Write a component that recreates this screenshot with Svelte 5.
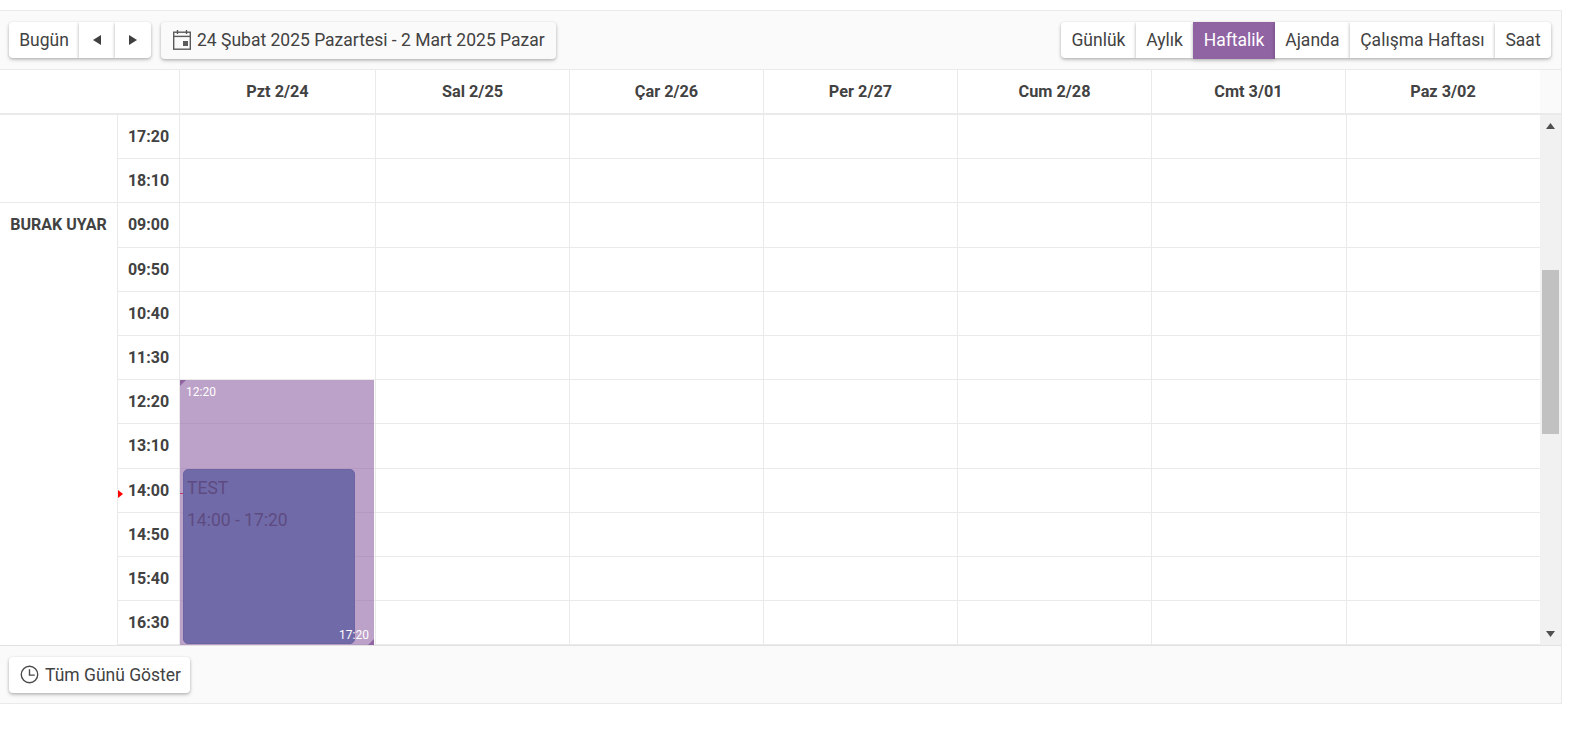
<script>
	const days = ['Pzt 2/24', 'Sal 2/25', 'Çar 2/26', 'Per 2/27', 'Cum 2/28', 'Cmt 3/01', 'Paz 3/02'];
	const times = ['17:20', '18:10', '09:00', '09:50', '10:40', '11:30', '12:20', '13:10', '14:00', '14:50', '15:40', '16:30'];
	const views = ['Günlük', 'Aylık', 'Haftalik', 'Ajanda', 'Çalışma Haftası', 'Saat'];
</script>

<div class="scheduler">
	<div class="toolbar">
		<div class="nav">
			<button class="btn today">Bugün</button>
			<button class="btn arrow" aria-label="Önceki">
				<svg width="8" height="10" viewBox="0 0 8 10"><polygon points="8,0 8,10 0,5" /></svg>
			</button>
			<button class="btn arrow" aria-label="Sonraki">
				<svg width="8" height="10" viewBox="0 0 8 10"><polygon points="0,0 0,10 8,5" /></svg>
			</button>
		</div>
		<button class="btn range">
			<svg class="cal" width="20" height="22" viewBox="0 0 20 22" fill="none" stroke="#5a5a5a" stroke-width="1.4">
				<rect x="1.7" y="3.2" width="16.6" height="17" />
				<line x1="1.7" y1="7.4" x2="18.3" y2="7.4" />
				<line x1="5.5" y1="1" x2="5.5" y2="5" />
				<line x1="14.5" y1="1" x2="14.5" y2="5" />
				<rect x="11" y="12" width="5" height="5" fill="#5a5a5a" stroke="none" />
			</svg>
			24 Şubat 2025 Pazartesi - 2 Mart 2025 Pazar
		</button>
		<div class="views">
			{#each views as view}
				<button class="btn view" class:active={view === 'Haftalik'}>{view}</button>
			{/each}
		</div>
	</div>

	<div class="head-row">
		<div class="head-grid">
			<div class="head-cell"></div>
			{#each days as day}
				<div class="head-cell">{day}</div>
			{/each}
		</div>
		<div class="gutter"></div>
	</div>

	<div class="body">
		<div class="grid">
			<div class="group first"></div>
			<div class="group rest">BURAK UYAR</div>
			{#each times as time, row}
				<div class="time" style="grid-row: {row + 1}">{time}</div>
				{#each days as day, col}
					<div class="slot" style="grid-row: {row + 1}; grid-column: {col + 3}"></div>
				{/each}
			{/each}

			<div class="marker"></div>
			<div class="marker-line"></div>

			<div class="shift">
				<span class="corner top"></span>
				<span class="shift-start">12:20</span>
				<span class="corner bottom"></span>
			</div>
			<div class="event">
				<div>TEST</div>
				<div>14:00 - 17:20</div>
			</div>
			<span class="shift-end">17:20</span>
		</div>

		<div class="scrollbar">
			<svg class="sb-arrow" width="9" height="6" viewBox="0 0 9 6"><polygon points="4.5,0 9,6 0,6" /></svg>
			<div class="track"><div class="thumb"></div></div>
			<svg class="sb-arrow" width="9" height="6" viewBox="0 0 9 6"><polygon points="0,0 9,0 4.5,6" /></svg>
		</div>
	</div>

	<div class="footer">
		<button class="btn allday">
			<svg width="19" height="19" viewBox="0 0 18 18" fill="none" stroke="#4a4a4a" stroke-width="1.3">
				<circle cx="9" cy="9" r="7.8" />
				<polyline points="9,4 9,9.6 14,9.6" />
			</svg>
			Tüm Günü Göster
		</button>
	</div>
</div>

<style>
	:global(body) {
		background: #fff;
		font-family: Roboto, "Liberation Sans", sans-serif;
		color: #424242;
	}

	.scheduler {
		width: 1562px;
		box-sizing: border-box;
		margin-top: 10px;
		border-top: 1px solid #eaeaea;
		border-right: 1px solid #eaeaea;
		border-bottom: 1px solid #eaeaea;
	}

	.toolbar {
		display: flex;
		align-items: center;
		height: 58px;
		padding: 0 10px 0 9px;
		background: #fafafa;
		border-bottom: 1px solid #eaeaea;
	}

	.btn {
		height: 36px;
		padding: 0 10.4px;
		border: none;
		background: #fff;
		color: #424242;
		font: 400 17.5px Roboto, sans-serif;
		white-space: nowrap;
		box-shadow: 0 1px 3px rgba(0, 0, 0, 0.2), 0 2px 4px rgba(0, 0, 0, 0.14);
		display: flex;
		align-items: center;
	}

	.btn svg {
		flex: none;
	}

	.nav {
		display: flex;
		border-radius: 4px;
	}

	.nav .btn:first-child {
		border-radius: 4px 0 0 4px;
	}

	.nav .btn:last-child {
		border-radius: 0 4px 4px 0;
	}

	.today {
		width: 70px;
		justify-content: center;
		padding: 0;
	}

	.arrow {
		width: 36px;
		justify-content: center;
		padding: 0;
	}

	.arrow polygon {
		fill: #3f3f3f;
	}

	.range {
		margin-left: 10px;
		height: 37px;
		padding: 0 11px;
		gap: 5px;
		background: #fafafa;
		border-radius: 4px;
	}

	.views {
		display: flex;
		margin-left: auto;
	}

	.view:first-child {
		border-radius: 4px 0 0 4px;
	}

	.view:last-child {
		border-radius: 0 4px 4px 0;
	}

	.view.active {
		background: #9063a3;
		color: #fff;
		height: 37px;
	}

	.head-row {
		display: flex;
		height: 43px;
		border-bottom: 2px solid #eaeaea;
		box-sizing: content-box;
	}

	.head-grid {
		display: grid;
		grid-template-columns: 180px 196px repeat(6, 194px);
		width: 1540px;
	}

	.head-cell {
		display: flex;
		align-items: center;
		justify-content: center;
		font-size: 16.3px;
		font-weight: 700;
		border-right: 1px solid #eaeaea;
		box-sizing: border-box;
	}

	.head-cell:last-child {
		border-right: none;
	}

	.gutter {
		flex: 1;
		background: #fafafa;
	}

	.body {
		display: flex;
		height: 530px;
		overflow: hidden;
		border-bottom: 1px solid #e2e2e2;
	}

	.grid {
		position: relative;
		display: grid;
		grid-template-columns: 118px 62px 196px 194px 194px 194px 194px 195px 193px;
		grid-auto-rows: 44.2px;
		width: 1540px;
	}

	.group {
		grid-column: 1;
		border-right: 1px solid #eaeaea;
		box-sizing: border-box;
		font-size: 16px;
		font-weight: 700;
		text-align: center;
	}

	.group.first {
		grid-row: 1 / 3;
		border-bottom: 1px solid #eaeaea;
	}

	.group.rest {
		grid-row: 3 / 13;
		padding-top: 12px;
	}

	.time {
		grid-column: 2;
		display: flex;
		align-items: center;
		justify-content: center;
		font-size: 16px;
		font-weight: 700;
		border-right: 1px solid #eaeaea;
		border-bottom: 1px solid #eaeaea;
		box-sizing: border-box;
	}

	.slot {
		border-right: 1px solid #eaeaea;
		border-bottom: 1px solid #eaeaea;
		box-sizing: border-box;
	}

	.slot:nth-child(8n + 2) {
		border-right: none;
	}

	.marker {
		position: absolute;
		left: 118px;
		top: 375px;
		border-left: 5px solid #f00;
		border-top: 4px solid transparent;
		border-bottom: 4px solid transparent;
	}

	.marker-line {
		position: absolute;
		left: 180px;
		top: 378px;
		width: 4px;
		height: 1px;
		background: #f00;
	}

	.shift {
		position: absolute;
		left: 180px;
		top: 265px;
		width: 194px;
		bottom: 0;
		background: rgba(144, 99, 163, 0.6);
		color: #fff;
		font-size: 12px;
	}

	.shift-start {
		position: absolute;
		left: 6px;
		top: 5px;
	}

	.shift-end {
		position: absolute;
		left: 339px;
		bottom: 3px;
		color: #fff;
		font-size: 12px;
	}

	.corner {
		position: absolute;
		width: 0;
		height: 0;
		border-style: solid;
	}

	.corner.top {
		left: 0;
		top: 0;
		border-width: 6px 6px 0 0;
		border-color: #9063a3 transparent transparent transparent;
	}

	.corner.bottom {
		right: 0;
		bottom: 0;
		border-width: 0 0 6px 6px;
		border-color: transparent transparent #9063a3 transparent;
	}

	.event {
		position: absolute;
		left: 183px;
		top: 353.5px;
		width: 172px;
		bottom: 1px;
		box-sizing: border-box;
		padding: 2px 3px;
		background: #706aa8;
		border: 1px solid #6a64a2;
		border-radius: 5px;
		color: #5e4a80;
		font-size: 17.5px;
		line-height: 32px;
	}

	.scrollbar {
		flex: 1;
		display: flex;
		flex-direction: column;
		background: #f1f1f1;
		align-items: center;
	}

	.sb-arrow {
		flex: none;
		margin: 8px 0 4px;
	}

	.sb-arrow:last-child {
		margin: 4px 0 8px;
	}

	.sb-arrow polygon {
		fill: #505050;
	}

	.track {
		flex: 1;
		width: 100%;
		position: relative;
	}

	.thumb {
		position: absolute;
		left: 2px;
		right: 2px;
		top: 137px;
		height: 164px;
		background: #c1c1c1;
	}

	.footer {
		height: 57px;
		display: flex;
		align-items: center;
		padding-left: 9px;
		background: #fafafa;
	}

	.allday {
		height: 36px;
		width: 181px;
		padding: 0 0 0 11px;
		gap: 6px;
		border-radius: 4px;
	}
</style>
